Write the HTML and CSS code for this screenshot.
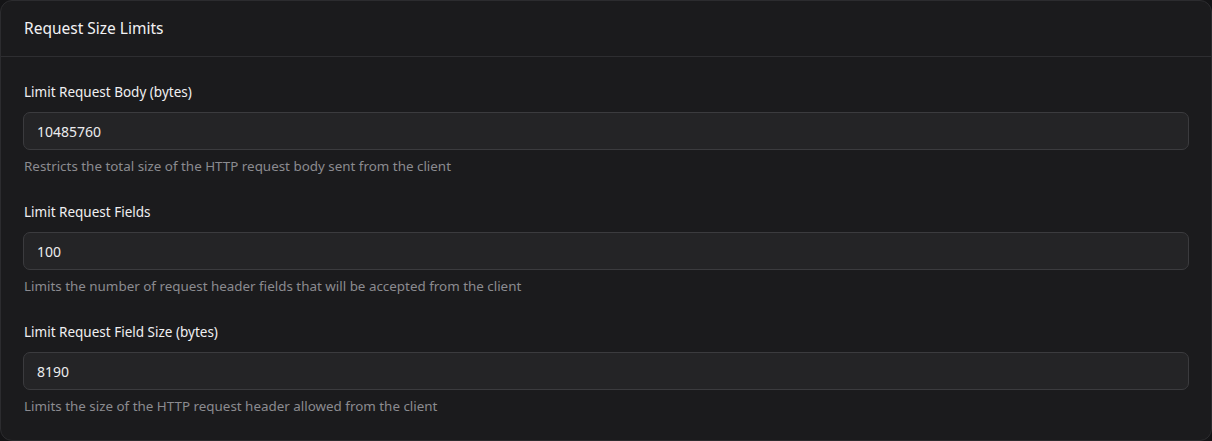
FILE: index.html
```html
<!DOCTYPE html>
<html lang="en">
<head>
  <meta charset="UTF-8">
  <title>Request Size Limits</title>
  <link rel="stylesheet" href="styles.css">
</head>
<body>
  <div class="card">
    <div class="card-header">
      <h2>Request Size Limits</h2>
    </div>
    <div class="card-body">
      <div class="field">
        <label for="body-limit">Limit Request Body (bytes)</label>
        <input type="text" id="body-limit" value="10485760">
        <p class="help">Restricts the total size of the HTTP request body sent from the client</p>
      </div>
      <div class="field">
        <label for="fields-limit">Limit Request Fields</label>
        <input type="text" id="fields-limit" value="100">
        <p class="help">Limits the number of request header fields that will be accepted from the client</p>
      </div>
      <div class="field">
        <label for="field-size">Limit Request Field Size (bytes)</label>
        <input type="text" id="field-size" value="8190">
        <p class="help">Limits the size of the HTTP request header allowed from the client</p>
      </div>
    </div>
  </div>
</body>
</html>
```

FILE: styles.css
```css
/* Basic Styles */
body {
  font-family: "Noto Sans", "Open Sans", sans-serif;
  margin: 0;
  padding: 0;
  background: #141416;
  color: #ececee;
}

/* Card */
.card {
  background: #1b1b1d;
  border: 1px solid #2c2c2f;
  border-radius: 12px;
  min-height: 439px;
}

.card-header {
  padding: 0 23px;
  height: 55px;
  display: flex;
  align-items: center;
  border-bottom: 1px solid #2e2e31;
}

.card-header h2 {
  margin: 0 0 1px;
  font-size: 15.5px;
  font-weight: 450;
  color: #f2f2f4;
}

.card-body {
  padding: 24px 22px 20px;
  display: flex;
  flex-direction: column;
  gap: 25px;
}

/* Fields */
.field {
  display: flex;
  flex-direction: column;
}

.field label {
  font-size: 13.5px;
  font-weight: 420;
  line-height: 22px;
  margin: 0 0 9px 1px;
  color: #f0f0f2;
}

.field input {
  height: 38px;
  box-sizing: border-box;
  padding: 0 13px;
  background: #242426;
  border: 1px solid #3b3b3e;
  border-radius: 7px;
  color: #ececee;
  font-family: inherit;
  font-size: 14px;
  outline: none;
}

.help {
  margin: 6px 0 0 1px;
  font-size: 13.4px;
  line-height: 20px;
  color: #8b8b90;
}
```
